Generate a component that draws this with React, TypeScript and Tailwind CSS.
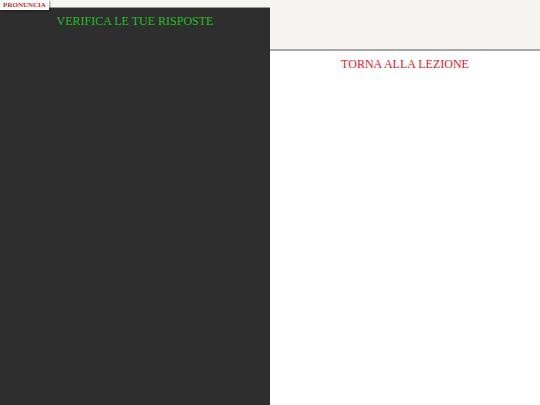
import React from "react";

export default function App() {
  return (
    <div className="relative flex h-[405px] w-[540px] bg-[#f5f4f0] font-['Liberation_Serif',serif]">
      <div className="flex w-[270px] flex-col pt-[7px]">
        <div className="flex-1 border-t border-[#9a9a9a] bg-[#2e2e2e] pt-0 text-center">
          <span className="text-[12px] leading-[14px] text-[#22c022]">VERIFICA LE TUE RISPOSTE</span>
        </div>
      </div>
      <div className="flex flex-1 flex-col">
        <div className="h-[51px] border-b-2 border-[#a8a8a8] bg-[#f5f4f0]" />
        <div className="flex-1 bg-white pt-0 text-center">
          <span className="text-[12px] leading-[14px] text-[#e0202a]">TORNA ALLA LEZIONE</span>
        </div>
      </div>
      <div className="absolute left-0 top-0 flex h-[10px] w-[49px] items-center justify-center bg-white shadow-[1px_1px_2px_rgba(0,0,0,0.4)]">
        <span className="text-[7px] font-bold leading-[8px] text-[#c81e2a]">PRONUNCIA</span>
      </div>
    </div>
  );
}
